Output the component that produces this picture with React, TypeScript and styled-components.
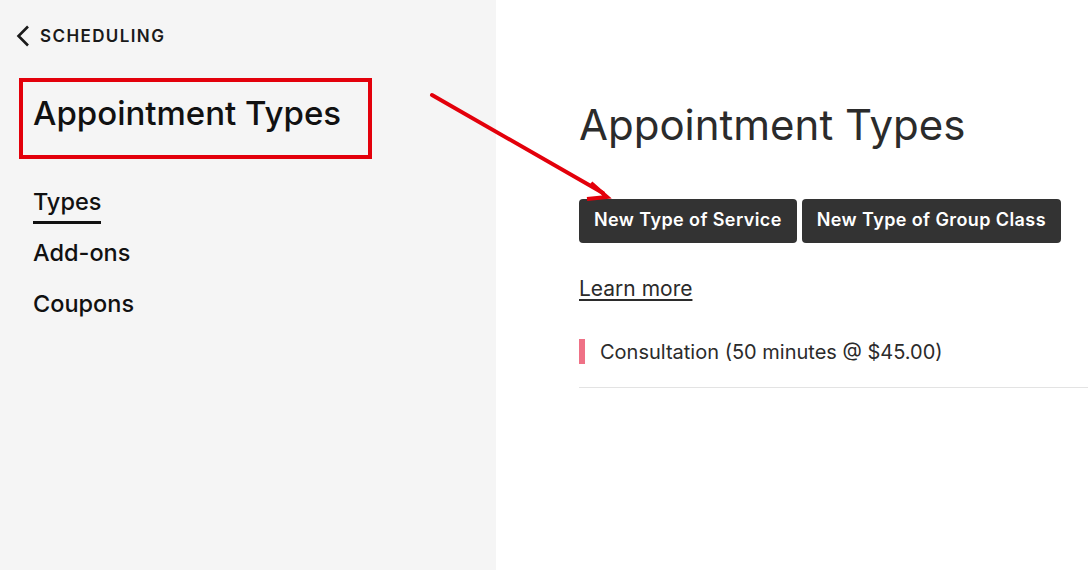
import styled, { createGlobalStyle } from 'styled-components';

const GlobalStyle = createGlobalStyle`
  html, body {
    margin: 0;
    padding: 0;
    background: #ffffff;
    font-family: Inter, "Liberation Sans", Arial, sans-serif;
  }
`;

// Layout
const Page = styled.div`
  position: relative;
  display: flex;
  width: 1088px;
  height: 570px;
  overflow: hidden;
`;

const Sidebar = styled.aside`
  width: 496px;
  flex-shrink: 0;
  background: #f5f5f5;
  padding: 24px 0 0 0;
  box-sizing: border-box;
`;

const BackLink = styled.a`
  display: flex;
  align-items: center;
  gap: 8px;
  padding-left: 15px;
  color: #1a1a1a;
  font-size: 17px;
  font-weight: 600;
  letter-spacing: 1.4px;
  text-decoration: none;
`;

const TitleBox = styled.div`
  margin: 30px 0 0 19px;
  width: 353px;
  height: 81px;
  box-sizing: border-box;
  border: 4px solid #e3000b;
  padding: 11px 0 0 10px;
`;

const SideTitle = styled.h2`
  margin: 0;
  font-size: 33px;
  font-weight: 500;
  color: #111;
`;

const Nav = styled.nav`
  display: flex;
  flex-direction: column;
  align-items: flex-start;
  padding: 30px 0 0 33px;
  gap: 16px;
`;

const NavItem = styled.a<{ $active?: boolean }>`
  font-size: 23.5px;
  font-weight: 500;
  color: #111;
  text-decoration: none;
  line-height: 26px;
  padding-bottom: 6px;
  border-bottom: 3px solid ${({ $active }) => ($active ? '#111' : 'transparent')};
`;

const Main = styled.main`
  flex: 1;
  padding: 98px 0 0 83px;
  box-sizing: border-box;
`;

const MainTitle = styled.h1`
  margin: 0;
  font-size: 42px;
  font-weight: 400;
  color: #2b2b2b;
  line-height: 54px;
`;

const ButtonRow = styled.div`
  display: flex;
  gap: 5px;
  margin-top: 47px;
`;

const DarkButton = styled.button`
  height: 44px;
  padding: 0 15px 4px;
  border: none;
  border-radius: 4px;
  background: #333333;
  color: #ffffff;
  font-family: Inter, "Liberation Sans", Arial, sans-serif;
  font-size: 18px;
  font-weight: 600;
  letter-spacing: 0.4px;
  cursor: pointer;
`;

const LearnMore = styled.a`
  display: inline-block;
  margin-top: 33px;
  font-size: 21px;
  color: #2b2b2b;
  text-decoration: underline;
  text-underline-offset: 3px;
`;

const TypeRow = styled.div`
  display: flex;
  align-items: center;
  gap: 15px;
  margin-top: 38px;
  padding-bottom: 23px;
  border-bottom: 1px solid #e3e3e3;
`;

const ColorMark = styled.span<{ $color: string }>`
  width: 6px;
  height: 25px;
  background: ${({ $color }) => $color};
`;

const TypeLabel = styled.span`
  font-size: 20px;
  color: #2b2b2b;
`;

const ArrowOverlay = styled.svg`
  position: absolute;
  left: 0;
  top: 0;
  pointer-events: none;
`;

export default function App() {
  return (
    <>
      <GlobalStyle />
      <Page>
        <Sidebar>
          <BackLink href="#">
            <svg width="17" height="24" viewBox="0 0 17 24" fill="none">
              <path d="M13 2.5 L3.5 12 L13 21.5" stroke="#1a1a1a" strokeWidth="2.6" />
            </svg>
            SCHEDULING
          </BackLink>
          <TitleBox>
            <SideTitle>Appointment Types</SideTitle>
          </TitleBox>
          <Nav>
            <NavItem href="#" $active>Types</NavItem>
            <NavItem href="#">Add-ons</NavItem>
            <NavItem href="#">Coupons</NavItem>
          </Nav>
        </Sidebar>
        <Main>
          <MainTitle>Appointment Types</MainTitle>
          <ButtonRow>
            <DarkButton>New Type of Service</DarkButton>
            <DarkButton>New Type of Group Class</DarkButton>
          </ButtonRow>
          <LearnMore href="#">Learn more</LearnMore>
          <TypeRow>
            <ColorMark $color="#ef7186" />
            <TypeLabel>Consultation (50 minutes @ $45.00)</TypeLabel>
          </TypeRow>
        </Main>
        <ArrowOverlay width="1088" height="570" viewBox="0 0 1088 570">
          <line x1="432" y1="95" x2="603" y2="193" stroke="#e3000b" strokeWidth="4" strokeLinecap="round" />
          <path d="M591 183 L607 197 L587 199" stroke="#e3000b" strokeWidth="4" fill="none" strokeLinejoin="miter" />
        </ArrowOverlay>
      </Page>
    </>
  );
}
